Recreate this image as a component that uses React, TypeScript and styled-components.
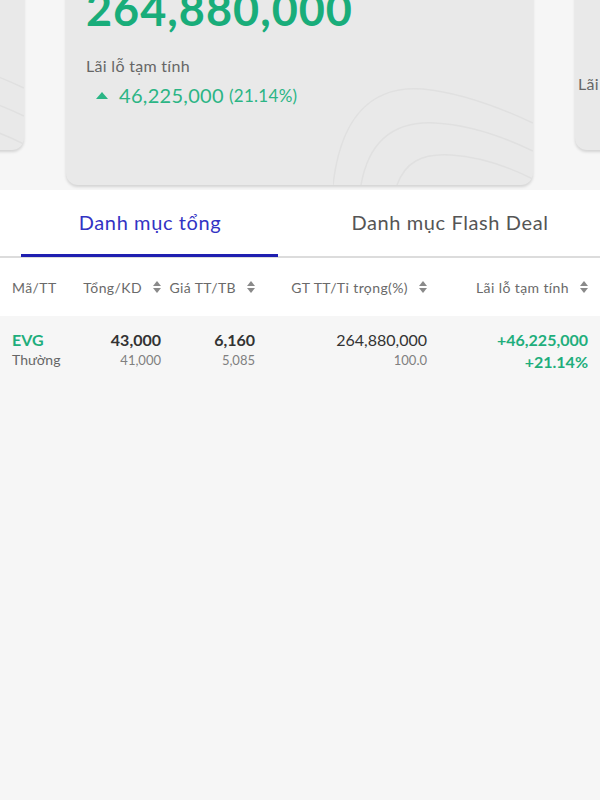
import React from 'react';
import styled, { createGlobalStyle } from 'styled-components';

const GlobalStyle = createGlobalStyle`
  html, body {
    margin: 0;
    padding: 0;
    background: #f6f6f6;
    font-family: Lato, "Noto Sans", sans-serif;
  }
  * { box-sizing: border-box; }
`;

const columns = [
  { label: 'Mã/TT', sort: false },
  { label: 'Tổng/KD', sort: true },
  { label: 'Giá TT/TB', sort: true },
  { label: 'GT TT/Tỉ trọng(%)', sort: true },
  { label: 'Lãi lỗ tạm tính', sort: true },
];

const rows = [
  {
    code: 'EVG',
    type: 'Thường',
    total: '43,000',
    avail: '41,000',
    price: '6,160',
    avg: '5,085',
    value: '264,880,000',
    weight: '100.0',
    pnl: '+46,225,000',
    pnlPct: '+21.14%',
  },
];

const Curves = () => (
  <svg width="200" height="120" viewBox="0 0 200 120" fill="none">
    <path d="M0 120 C8 50 40 20 90 24 C130 28 170 44 200 58" stroke="#e0e0e0" strokeWidth="1.5" />
    <path d="M28 120 C36 75 62 56 102 58 C140 60 175 74 200 86" stroke="#e0e0e0" strokeWidth="1.5" />
    <path d="M64 120 C72 98 88 88 118 90 C150 92 180 104 200 114" stroke="#e0e0e0" strokeWidth="1.5" />
  </svg>
);

const SortIcon = () => (
  <svg width="8" height="12" viewBox="0 0 8 12">
    <path d="M4 0 L8 5 H0 Z" fill="#8a8a8a" />
    <path d="M4 12 L8 7 H0 Z" fill="#8a8a8a" />
  </svg>
);

const App = () => {
  return (
    <Page>
      <GlobalStyle />
      <Carousel>
        <Track>
          <SideCard $side="left">
            <CurveHolder><Curves /></CurveHolder>
          </SideCard>
          <Card>
            <BigValue>264,880,000</BigValue>
            <Label>Lãi lỗ tạm tính</Label>
            <Change>
              <Triangle />
              <ChangeValue>46,225,000</ChangeValue>
              <ChangePct>(21.14%)</ChangePct>
            </Change>
            <CurveHolder><Curves /></CurveHolder>
          </Card>
          <SideCard $side="right">
            <SideLabel>Lãi lỗ tạm tính</SideLabel>
          </SideCard>
        </Track>
      </Carousel>

      <Panel>
        <Tabs>
          <Tab $active>Danh mục tổng</Tab>
          <Tab>Danh mục Flash Deal</Tab>
        </Tabs>

        <HeaderRow>
          {columns.map((c, i) => (
            <HeadCell key={c.label} $first={i === 0}>
              <span>{c.label}</span>
              {c.sort && <SortIcon />}
            </HeadCell>
          ))}
        </HeaderRow>
      </Panel>

      <Body>
        {rows.map((r) => (
          <DataRow key={r.code}>
            <Cell $align="left">
              <Code>{r.code}</Code>
              <Sub>{r.type}</Sub>
            </Cell>
            <Cell>
              <Main $bold>{r.total}</Main>
              <Small>{r.avail}</Small>
            </Cell>
            <Cell>
              <Main $bold>{r.price}</Main>
              <Small>{r.avg}</Small>
            </Cell>
            <Cell>
              <Main>{r.value}</Main>
              <Small>{r.weight}</Small>
            </Cell>
            <Cell>
              <Main $bold $green>{r.pnl}</Main>
              <Main $bold $green>{r.pnlPct}</Main>
            </Cell>
          </DataRow>
        ))}
      </Body>
    </Page>
  );
};

const Page = styled.div`
  width: 600px;
  min-height: 800px;
  display: flex;
  flex-direction: column;
  background: #f6f6f6;
`;

const Carousel = styled.div`
  height: 190px;
  overflow: hidden;
  background: #f6f6f6;
  display: flex;
  align-items: flex-end;
`;

const Track = styled.div`
  display: flex;
  align-items: flex-end;
  gap: 42px;
  margin-left: -443px;
  padding-bottom: 5px;
`;

const Card = styled.div`
  position: relative;
  overflow: hidden;
  width: 467px;
  height: 240px;
  flex-shrink: 0;
  background: #e9e9e9;
  border-radius: 12px;
  box-shadow: 0 2px 3px rgba(0, 0, 0, 0.14);
  padding: 42px 20px 0;
`;

const SideCard = styled(Card)<{ $side: 'left' | 'right' }>`
  height: 200px;
  margin-bottom: 35px;
  padding: ${(p) => (p.$side === 'right' ? '124px 0 0 3px' : '0')};
`;

const CurveHolder = styled.div`
  position: absolute;
  right: 0;
  bottom: 0;
  line-height: 0;
`;

const BigValue = styled.div`
  font-size: 45px;
  font-weight: 700;
  color: #19ad7a;
  line-height: 1;
  letter-spacing: 1px;
`;

const Label = styled.div`
  margin-top: 24px;
  font-size: 16px;
  letter-spacing: 0.3px;
  color: #666;
`;

const SideLabel = styled(Label)`
  margin-top: 0;
`;

const Change = styled.div`
  display: flex;
  align-items: center;
  margin-top: 8px;
  padding-left: 10px;
  color: #2bb585;
`;

const Triangle = styled.span`
  width: 0;
  height: 0;
  border-left: 6px solid transparent;
  border-right: 6px solid transparent;
  border-bottom: 7px solid #2bb585;
  margin-right: 11px;
`;

const ChangeValue = styled.span`
  font-size: 20px;
  letter-spacing: 0.3px;
`;

const ChangePct = styled.span`
  font-size: 17px;
  margin-left: 5px;
  letter-spacing: 0.3px;
`;

const Panel = styled.div`
  background: #fff;
`;

const Tabs = styled.div`
  display: flex;
  height: 68px;
  border-bottom: 2px solid #dcdcdc;
`;

const Tab = styled.div<{ $active?: boolean }>`
  flex: 1;
  position: relative;
  display: flex;
  align-items: center;
  justify-content: center;
  padding-bottom: 2px;
  font-size: 20px;
  letter-spacing: 0.6px;
  color: ${(p) => (p.$active ? '#3333c4' : '#555')};

  &::after {
    content: '';
    display: ${(p) => (p.$active ? 'block' : 'none')};
    position: absolute;
    left: 21px;
    right: 22px;
    bottom: -1px;
    height: 3px;
    background: #1f1fb0;
  }
`;

const grid = `
  display: grid;
  grid-template-columns: 58px 91px 94px 172px 1fr;
  padding: 0 12px;
`;

const HeaderRow = styled.div`
  ${grid}
  height: 58px;
  align-items: center;
`;

const HeadCell = styled.div<{ $first?: boolean }>`
  display: flex;
  align-items: center;
  justify-content: ${(p) => (p.$first ? 'flex-start' : 'flex-end')};
  gap: 11px;
  font-size: 14px;
  letter-spacing: 0.4px;
  color: #6a6a6a;
  white-space: nowrap;
`;

const Body = styled.div`
  flex: 1;
  background: #f6f6f6;
`;

const DataRow = styled.div`
  ${grid}
  padding-top: 13px;
  padding-bottom: 14px;
`;

const Cell = styled.div<{ $align?: 'left' | 'right' }>`
  display: flex;
  flex-direction: column;
  align-items: ${(p) => (p.$align === 'left' ? 'flex-start' : 'flex-end')};
  white-space: nowrap;
`;

const Code = styled.div`
  font-size: 16px;
  font-weight: 700;
  color: #1fae7c;
  line-height: 22px;
`;

const Sub = styled.div`
  font-size: 14px;
  color: #666;
  line-height: 18px;
`;

const Main = styled.div<{ $bold?: boolean; $green?: boolean }>`
  font-size: 16px;
  font-weight: ${(p) => (p.$bold ? 700 : 400)};
  color: ${(p) => (p.$green ? '#1fae7c' : '#333')};
  line-height: 22px;
`;

const Small = styled.div`
  font-size: 13px;
  color: #808080;
  line-height: 18px;
`;

export default App;
